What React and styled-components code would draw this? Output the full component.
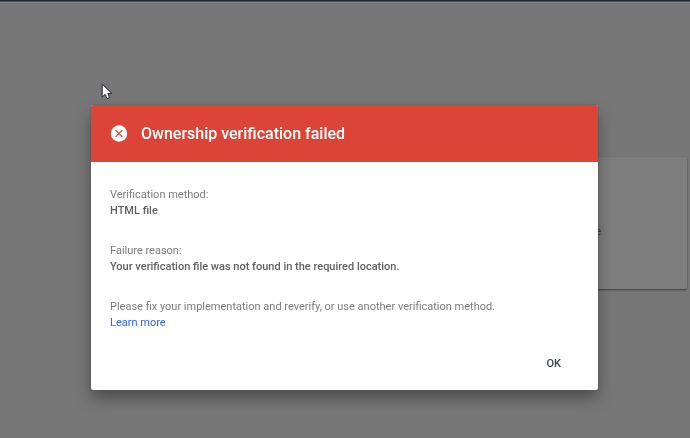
import React from 'react';
import styled, { createGlobalStyle } from 'styled-components';

const messages = [
    { label: 'Verification method:', value: 'HTML file' },
    { label: 'Failure reason:', value: 'Your verification file was not found in the required location.' },
];

const FailedIcon = () => (
    <svg width="18" height="18" viewBox="0 0 18 18" aria-hidden="true">
        <circle cx="9" cy="8.5" r="8.2" fill="#fff" />
        <path d="M5.6 5.1l6.8 6.8M12.4 5.1l-6.8 6.8" stroke="#db4437" strokeWidth="1.3" />
    </svg>
)

const App = () => {
    return(
        <>
            <GlobalStyle />
            <StyledPage>
                <StyledTopBar />
                <StyledMethodCard>file</StyledMethodCard>
            </StyledPage>
            <StyledOverlay>
                <StyledDialog role="dialog" aria-modal="true" aria-labelledby="dialog-title">
                    <StyledHeader>
                        <FailedIcon />
                        <StyledTitle id="dialog-title">Ownership verification failed</StyledTitle>
                    </StyledHeader>
                    <StyledContent>
                        {messages.map(({ label, value }) => (
                            <StyledMessage key={label}>
                                {label}
                                <strong>{value}</strong>
                            </StyledMessage>
                        ))}
                        <StyledMessage>
                            Please fix your implementation and reverify, or use another verification method.
                            <a href="#learn-more">Learn more</a>
                        </StyledMessage>
                    </StyledContent>
                    <StyledActions>
                        <StyledButton type="button">OK</StyledButton>
                    </StyledActions>
                </StyledDialog>
            </StyledOverlay>
            <StyledPointer width="12" height="18" viewBox="0 0 12 18" aria-hidden="true">
                <path
                    d="M1.2 1v13l3-2.6 1.8 4.2 2.6-1.1-1.8-4.1h4z"
                    fill="#fff"
                    stroke="#20202c"
                    strokeWidth="1"
                />
            </StyledPointer>
        </>
    )
}

const GlobalStyle = createGlobalStyle`
    *{
        box-sizing:border-box;
    }
    body{
        margin:0;
        background:#777;
        font-family:Roboto, sans-serif;
        font-size:11px;
        line-height:16px;
    }
`

const StyledPage = styled.div`
    min-height:100vh;
    display:flex;
    flex-direction:column;
`

const StyledTopBar = styled.div`
    height:2px;
    background:#1b282d;
    border-bottom:1px solid #46555c;
    box-shadow:0 1px 0 #858388;
`

const StyledMethodCard = styled.div`
    align-self:flex-end;
    width:170px;
    height:132px;
    margin:155px 3px 0 0;
    padding:67px 86px 0 0;
    text-align:right;
    color:#30373a;
    background:#7e7e7e;
    border-radius:2px;
    box-shadow:0 1px 2px rgba(0,0,0,0.5);
`

const StyledOverlay = styled.div`
    position:fixed;
    inset:0;
    padding:105px 92px 48px 91px;
`

const StyledDialog = styled.section`
    background:#fff;
    border-radius:2px;
    overflow:hidden;
    box-shadow:0 0 1px rgba(0,0,0,0.5), 0 8px 16px rgba(0,0,0,0.36);
`

const StyledHeader = styled.header`
    height:57px;
    padding:0 19px;
    display:flex;
    align-items:center;
    gap:13px;
    background:#db4437;
`

const StyledTitle = styled.h1`
    margin:0;
    font-size:16px;
    font-weight:500;
    color:#fff;
`

const StyledContent = styled.div`
    padding:25px 19px 18px;
    display:flex;
    flex-direction:column;
    gap:24px;
`

const StyledMessage = styled.p`
    margin:0;
    color:#7c7c7c;
    strong, a{
        display:block;
    }
    strong{
        font-weight:500;
        color:#616161;
    }
    a{
        width:fit-content;
        color:#2962ff;
        text-decoration:none;
    }
`

const StyledActions = styled.footer`
    padding:0 21px 13px;
    display:flex;
    justify-content:flex-end;
`

const StyledButton = styled.button`
    height:28px;
    padding:0 16px;
    border:0;
    background:transparent;
    font-family:inherit;
    font-size:11px;
    font-weight:500;
    color:#37474f;
    cursor:pointer;
`

const StyledPointer = styled.svg`
    position:absolute;
    top:83px;
    left:101px;
`

export default App;
